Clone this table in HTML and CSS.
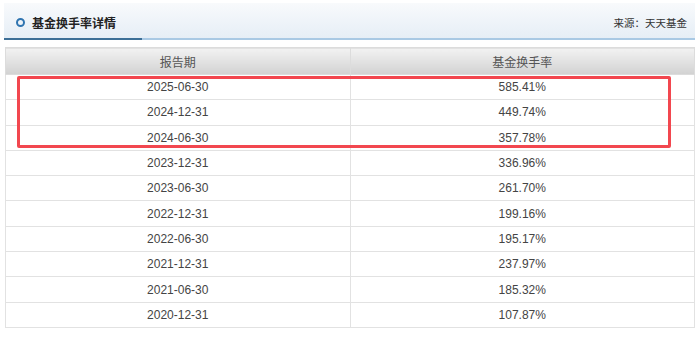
FILE: index.html
```
<!DOCTYPE html>
<html lang="zh">
<head>
<meta charset="utf-8">
<link rel="stylesheet" href="styles.css">
</head>
<body>
<div class="panel">
  <div class="head">
    <div class="title"><span class="ring"></span>基金换手率详情</div>
    <div class="source">来源：天天基金</div>
  </div>
  <div class="underline"><div class="dark"></div><div class="light"></div></div>
  <div class="tablewrap">
    <table class="grid">
      <thead>
        <tr><th>报告期</th><th>基金换手率</th></tr>
      </thead>
      <tbody>
        <tr><td>2025-06-30</td><td>585.41%</td></tr>
        <tr><td>2024-12-31</td><td>449.74%</td></tr>
        <tr><td>2024-06-30</td><td>357.78%</td></tr>
        <tr><td>2023-12-31</td><td>336.96%</td></tr>
        <tr><td>2023-06-30</td><td>261.70%</td></tr>
        <tr><td>2022-12-31</td><td>199.16%</td></tr>
        <tr><td>2022-06-30</td><td>195.17%</td></tr>
        <tr><td>2021-12-31</td><td>237.97%</td></tr>
        <tr><td>2021-06-30</td><td>185.32%</td></tr>
        <tr><td>2020-12-31</td><td>107.87%</td></tr>
      </tbody>
    </table>
    <div class="highlight"></div>
  </div>
</div>
</body>
</html>
```
FILE: styles.css
```
* { box-sizing: border-box; }
html, body { margin: 0; padding: 0; background: #fff; }
body {
  font-family: "Liberation Sans", Arial, "Noto Sans CJK SC", sans-serif;
  color: #333;
}
.panel {
  padding: 3px 5px 0 4px;
  width: 700px;
}
.head {
  height: 35px;
  display: flex;
  align-items: center;
  justify-content: space-between;
  background: linear-gradient(#f8fafc, #e6eef6);
  padding: 4px 8px 0 12px;
}
.title {
  display: flex;
  align-items: center;
  font-size: 12px;
  font-weight: bold;
  color: #222;
  font-family: "Noto Sans CJK SC", sans-serif;
}
.ring {
  width: 9px;
  height: 9px;
  border: 2px solid #2f74b0;
  border-radius: 50%;
  margin-right: 7px;
}
.source {
  font-size: 10.5px;
  color: #333;
  font-family: "Noto Sans CJK SC", sans-serif;
}
.underline {
  display: flex;
  height: 2px;
}
.underline .dark { width: 138px; background: #3c6f97; }
.underline .light { flex: 1; background: #a9c9e4; }
.tablewrap {
  position: relative;
  margin: 7px 0 0 1px;
}
.grid {
  width: 690px;
  border-collapse: collapse;
  table-layout: fixed;
  font-size: 12px;
}
.grid th, .grid td {
  border: 1px solid #e2e2e2;
  text-align: center;
  padding: 0;
}
.grid th {
  height: 27px;
  font-weight: normal;
  color: #555;
  font-family: "Noto Sans CJK SC", sans-serif;
  font-size: 12px;
  background: linear-gradient(#f2f2f2, #d2d2d2);
  border-color: #dcdcdc;
}
.grid td {
  height: 25.3px;
  color: #444;
}
.highlight {
  position: absolute;
  left: 12px;
  top: 29px;
  width: 654px;
  height: 72px;
  border: 3px solid #f2474f;
  border-radius: 2px;
}
```
